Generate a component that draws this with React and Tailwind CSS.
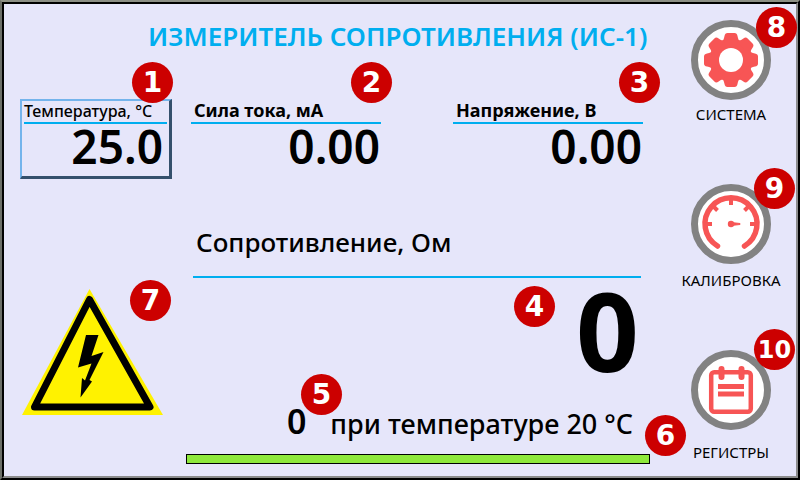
import React from "react";

const sans = "font-['Noto_Sans','Open_Sans',sans-serif]";

function Badge({ n, className }) {
  return (
    <span
      className={`absolute z-10 flex size-[41px] items-center justify-center rounded-full bg-[#cc0000] font-['DejaVu_Sans','Noto_Sans',sans-serif] leading-none font-bold text-white ${n.length > 1 ? "text-[24px]" : "text-[28px]"} ${className}`}
    >
      {n}
    </span>
  );
}

function Gear() {
  return (
    <svg viewBox="0 0 80 80" className="size-20 shrink-0" aria-hidden="true">
      <circle cx="40" cy="40" r="36.5" fill="#fff" stroke="#828282" strokeWidth="7" />
      <g fill="#f75555">
        <circle cx="40" cy="40" r="21.5" />
        {[0, 45, 90, 135, 180, 225, 270, 315].map((a) => (
          <path
            key={a}
            transform={`rotate(${a} 40 40)`}
            d="M30 23 C32 21 33 19 33.5 16 Q34 13 36.5 13 H43.5 Q46 13 46.5 16 C47 19 48 21 50 23 Z"
          />
        ))}
      </g>
      <circle cx="40" cy="40" r="12" fill="#fff" />
    </svg>
  );
}

function Gauge() {
  return (
    <svg viewBox="0 0 80 80" className="size-20 shrink-0" aria-hidden="true">
      <circle cx="40" cy="40" r="36.5" fill="#fff" stroke="#828282" strokeWidth="7" />
      <path d="M26.5 62 A26 26 0 1 1 53.5 62" fill="none" stroke="#f75555" strokeWidth="5.5" strokeLinecap="round" />
      <path
        d="M40 14V21M14 40H21M66 40H59M22 22L26.5 26.5M58 22L53.5 26.5"
        stroke="#f75555"
        strokeWidth="4"
      />
      <circle cx="40" cy="40" r="3.2" fill="#f75555" />
      <path d="M40 38.5L49 39.5V40.5L40 41.5Z" fill="#f75555" stroke="#f75555" />
    </svg>
  );
}

function Notebook() {
  return (
    <svg viewBox="0 0 80 80" className="size-20 shrink-0" aria-hidden="true">
      <circle cx="40" cy="40" r="36.5" fill="#fff" stroke="#828282" strokeWidth="7" />
      <rect x="20.2" y="22.2" width="39.6" height="39.6" rx="3" fill="none" stroke="#f75555" strokeWidth="4.5" />
      <path d="M27 36.5H53M27 44H53" stroke="#f75555" strokeWidth="5" />
      <path d="M30.5 19V27M50.5 19V27" stroke="#f75555" strokeWidth="6" strokeLinecap="round" />
    </svg>
  );
}

function Warning() {
  return (
    <svg viewBox="0 0 141 126" className="block h-[126px] w-[141px]" role="img" aria-label="Высокое напряжение">
      <path d="M67.5 0L141 126H0Z" fill="#fff200" />
      <path d="M67.5 10.5L128 118H12.5Z" fill="#fff200" stroke="#000" strokeWidth="7" strokeLinejoin="round" />
      <path
        d="M64 46H76.5L69.5 67L81.5 63L67.5 91L70 92.5L58.5 108.5L60 89L63 91.5L69.5 74.5L56 78.5Z"
        fill="#000"
      />
    </svg>
  );
}

function MenuItem({ label, labelClass, children, badge }) {
  return (
    <button type="button" className="relative flex w-[120px] cursor-pointer flex-col items-center">
      {children}
      <span className={`text-[15px] leading-5 ${labelClass}`}>{label}</span>
      {badge}
    </button>
  );
}

function Reading({ label, value, className, badge }) {
  return (
    <section className={`relative ${className}`}>
      <h2 className="border-b-2 border-[#00aeef] pl-[3px] text-[18px] leading-[23px] font-bold whitespace-nowrap">
        {label}
      </h2>
      <output className="block pr-px text-right text-[46px] leading-[44px] font-semibold">{value}</output>
      {badge}
    </section>
  );
}

export default function App() {
  return (
    <div
      className={`${sans} flex min-h-screen border-2 border-t-[#8c8f84] border-r-black border-b-black border-l-[#6c6f68] text-black`}
    >
      <main className="flex min-w-0 flex-1 border-2 border-t-black border-r-[#8c8c8c] border-b-[#8c8c8c] border-l-black bg-[#e6e6fa]">
        <div className="flex min-w-0 flex-1 flex-col pl-4">
          <h1 className="pt-3.5 pl-32 text-[26px] leading-9 font-semibold whitespace-nowrap text-[#00aeef]">
            ИЗМЕРИТЕЛЬ СОПРОТИВЛЕНИЯ (ИС-1)
          </h1>

          <div className="mt-[45px] flex items-start pr-7">
            <button
              type="button"
              className="relative flex h-20 w-[152px] cursor-pointer flex-col justify-start border-t-2 border-r-[3px] border-b-[3px] border-l-2 border-t-[#74b4ec] border-r-[#34506c] border-b-[#34506c] border-l-[#74b4ec] px-0.5 text-left"
            >
              <span className="block w-full border-b-2 border-[#00aeef] text-[16px] leading-[21px] font-medium whitespace-nowrap">
                Температура, °C
              </span>
              <span className="block w-full pr-1 text-right text-[46px] leading-[44px] font-semibold">25.0</span>
              <Badge n="1" className="-top-[39px] left-[110px]" />
            </button>
            <Reading
              label="Сила тока, мА"
              value="0.00"
              className="ml-[19px] w-[190px]"
              badge={<Badge n="2" className="-top-[37px] left-40" />}
            />
            <Reading
              label="Напряжение, В"
              value="0.00"
              className="ml-auto w-[190px]"
              badge={<Badge n="3" className="-top-[37px] left-[166px]" />}
            />
          </div>

          <div className="flex flex-1">
            <div className="relative w-[166px] shrink-0 pt-[110px] pl-0.5">
              <Warning />
              <Badge n="7" className="top-[101px] left-[110px]" />
            </div>
            <div className="min-w-0 flex-1 pr-[21px]">
              <section className="relative mr-[9px] ml-[7px]">
                <h2 className="border-b-2 border-[#00aeef] pt-[45px] pb-4 pl-[3px] text-[26px] leading-9 font-medium whitespace-nowrap">
                  Сопротивление, Ом
                </h2>
                <output className="block pr-0.5 text-right text-[110px] leading-[102px] font-bold">0</output>
                <Badge n="4" className="top-[107px] left-[321px]" />
              </section>
              <p className="relative mt-[21px] flex items-baseline justify-end gap-6 pr-[17px] text-[27px] leading-10 font-medium whitespace-nowrap">
                <output className="text-[34px] font-semibold">0</output>
                <span>при температуре 20 °C</span>
                <Badge n="5" className="-top-[27px] left-[115px]" />
                <Badge n="6" className="top-3.5 -right-9" />
              </p>
              <div
                className="mt-2.5 h-2.5 border border-black bg-[#8ee83c]"
                role="progressbar"
                aria-label="Измерение"
              />
            </div>
          </div>
        </div>

        <nav className="flex w-[125px] shrink-0 flex-col gap-[60px] pt-4">
          <MenuItem label="СИСТЕМА" labelClass="mt-1" badge={<Badge n="8" className="-top-[13px] left-[85px]" />}>
            <Gear />
          </MenuItem>
          <MenuItem label="КАЛИБРОВКА" labelClass="mt-1.5" badge={<Badge n="9" className="-top-4 left-[83px]" />}>
            <Gauge />
          </MenuItem>
          <MenuItem label="РЕГИСТРЫ" labelClass="mt-3" badge={<Badge n="10" className="-top-[21px] left-[83px]" />}>
            <Notebook />
          </MenuItem>
        </nav>
      </main>
    </div>
  );
}
